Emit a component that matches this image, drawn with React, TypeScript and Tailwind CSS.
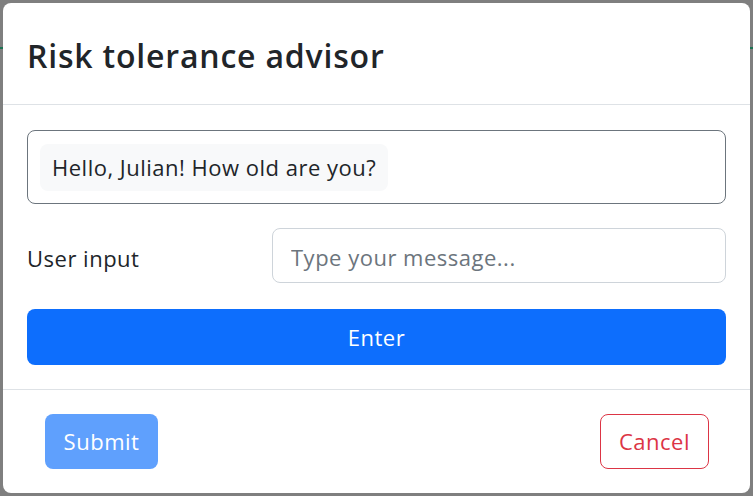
const font = { fontFamily: '"Open Sans", "Noto Sans", sans-serif' }

export default function App() {
  return (
    <div className="relative h-[496px] w-[753px] overflow-hidden bg-[#7f7f7f] p-[3px]" style={font}>
      {/* page behind the backdrop */}
      <div className="absolute left-0 right-0 top-[47px] h-[2px] bg-[#1b7252]" />

      <div className="relative flex h-[490px] flex-col rounded-lg bg-white text-[#212529]">
        <div className="flex h-[102px] items-center border-b border-[#dee2e6] px-6 pt-1">
          <h2 className="text-[32px] font-semibold leading-tight tracking-[0.8px]">Risk tolerance advisor</h2>
        </div>

        <div className="flex flex-col px-6 pt-[25px]">
          <div className="flex h-[74px] items-center rounded-lg border border-[#6c757d] px-3">
            <div className="flex h-[47px] items-center rounded-lg bg-[#f8f9fa] px-3 text-[22px] tracking-[0.5px]">
              Hello, Julian! How old are you?
            </div>
          </div>

          <div className="mt-6 flex items-center">
            <label className="w-[245px] pt-[5px] text-[22px] tracking-[0.5px]">User input</label>
            <input
              className="h-[55px] flex-1 rounded-lg border border-[#ced4da] px-[18px] pt-[3px] text-[22px] tracking-[0.5px] outline-none placeholder:text-[#6c757d]"
              placeholder="Type your message..."
            />
          </div>

          <button className="mt-[26px] h-[56px] rounded-lg bg-[#0d6efd] text-[22px] tracking-[0.5px] text-white">
            Enter
          </button>
        </div>

        <div className="mt-auto flex items-center justify-between border-t border-[#dee2e6] py-6 pl-[42px] pr-[41px]">
          <button className="h-[55px] w-[113px] rounded-lg bg-[#5fa0fd] text-[22px] tracking-[0.5px] text-white">
            Submit
          </button>
          <button className="h-[55px] w-[109px] rounded-lg border border-[#dc3545] text-[22px] tracking-[0.5px] text-[#dc3545]">
            Cancel
          </button>
        </div>
      </div>
    </div>
  )
}
